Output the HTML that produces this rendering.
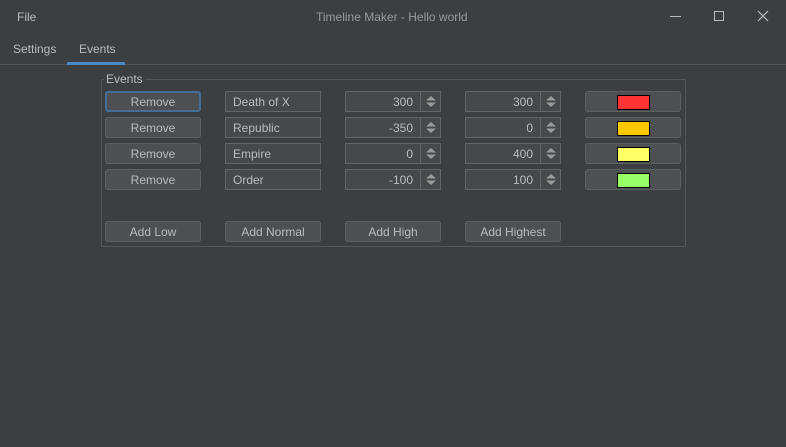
<!DOCTYPE html><html><head><style>
body{margin:0;width:786px;height:447px;background:#3c3f41;font-family:"Liberation Sans",sans-serif;font-size:12px;color:#bbbbbb;position:relative;overflow:hidden}
.a{position:absolute;box-sizing:border-box}
.btn{background:#4c5052;border:1px solid #5e6060;border-radius:3px;text-align:center;line-height:20px;height:21px;width:96px}
.fld{background:#45494a;border:1px solid #646464;height:21px;width:96px;line-height:20px;padding:0 7px}
.spin{text-align:right;padding-right:27px}
.spin:after{content:"";position:absolute;right:19px;top:0;bottom:0;border-left:1px solid #646464}
.ar{position:absolute;right:3px;top:3px;width:12px;height:13px}
.sw{position:absolute;left:31px;top:3px;width:33px;height:15px;border:1px solid #000;box-sizing:border-box}
</style></head><body>
<div class="a" style="left:17px;top:10px">File</div>
<div class="a" style="left:316px;top:10px;color:#999">Timeline Maker - Hello world</div>
<div class="a" style="left:670px;top:16px;width:11px;height:1px;background:#bbb"></div>
<div class="a" style="left:714px;top:11px;width:10px;height:10px;border:1px solid #bbb"></div>
<svg class="a" style="left:757px;top:10px" width="12" height="12"><path d="M1 1L11 11M11 1L1 11" stroke="#bbb" stroke-width="1.2"/></svg>
<div class="a" style="left:13px;top:42px">Settings</div>
<div class="a" style="left:79px;top:42px">Events</div>
<div class="a" style="left:0;top:64px;width:786px;height:1px;background:#555"></div>
<div class="a" style="left:67px;top:62px;width:58px;height:3px;background:#4a88c7"></div>
<div class="a" style="left:101px;top:79px;width:585px;height:168px;border:1px solid #555"></div>
<div class="a" style="left:104px;top:72px;background:#3c3f41;padding:0 2px">Events</div>
<div id="rows"></div>
<script>
var d=[["Death of X","300","300","#ff3333"],["Republic","-350","0","#ffc800"],["Empire","0","400","#ffff66"],["Order","-100","100","#99ff66"]];
var h="",arr='<svg class="ar" viewBox="0 0 12 13"><path d="M1 5.5L6 1L11 5.5ZM1 7.5L6 12L11 7.5Z" fill="#9a9a9a"/></svg>';
d.forEach(function(r,i){var y=91+26*i;
h+='<div class="a btn" style="left:105px;top:'+y+'px;'+(i==0?'border:2px solid #466d94;line-height:19px':'')+'">Remove</div>';
h+='<div class="a fld" style="left:225px;top:'+y+'px">'+r[0]+'</div>';
h+='<div class="a fld spin" style="left:345px;top:'+y+'px">'+r[1]+arr+'</div>';
h+='<div class="a fld spin" style="left:465px;top:'+y+'px">'+r[2]+arr+'</div>';
h+='<div class="a btn" style="left:585px;top:'+y+'px"><div class="sw" style="background:'+r[3]+'"></div></div>';});
["Add Low","Add Normal","Add High","Add Highest"].forEach(function(t,i){h+='<div class="a btn" style="left:'+(105+120*i)+'px;top:221px">'+t+'</div>';});
document.getElementById("rows").innerHTML=h;
</script>
</body></html>
